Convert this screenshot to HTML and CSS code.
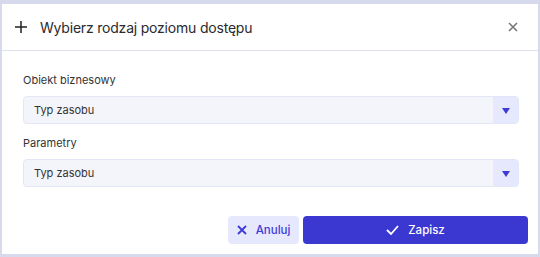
FILE: index.html
```html
<!DOCTYPE html>
<html lang="pl">
<head>
	<meta charset="UTF-8">
	<title>Wybierz rodzaj poziomu dostępu</title>
	<link rel="stylesheet" href="styles.css">
</head>
<body>
	<div class="dialog">
		<header class="naglowek">
			<svg class="ikona-plus" width="14" height="14" viewBox="0 0 14 14">
				<path d="M7 1v12M1 7h12" stroke="#222" stroke-width="1.5" fill="none"/>
			</svg>
			<h1>Wybierz rodzaj poziomu dostępu</h1>
			<button class="zamknij" aria-label="Zamknij">
				<svg width="10" height="10" viewBox="0 0 10 10">
					<path d="M1 1l8 8M9 1l-8 8" stroke="#777" stroke-width="1.6" fill="none"/>
				</svg>
			</button>
		</header>
		<section class="tresc">
			<label class="etykieta">Obiekt biznesowy</label>
			<div class="pole">
				<span class="wartosc">Typ zasobu</span>
				<span class="strzalka"><i></i></span>
			</div>
			<label class="etykieta">Parametry</label>
			<div class="pole">
				<span class="wartosc">Typ zasobu</span>
				<span class="strzalka"><i></i></span>
			</div>
		</section>
		<footer class="stopka">
			<button class="btn btn-anuluj">
				<svg width="10" height="10" viewBox="0 0 10 10">
					<path d="M1 1l8 8M9 1l-8 8" stroke="#3f3ad6" stroke-width="1.8" fill="none"/>
				</svg>
				Anuluj
			</button>
			<button class="btn btn-zapisz">
				<svg width="13" height="10" viewBox="0 0 13 10">
					<path d="M1 5l4 4 7-8" stroke="#fff" stroke-width="1.8" fill="none"/>
				</svg>
				Zapisz
			</button>
		</footer>
	</div>
</body>
</html>
```

FILE: styles.css
```css
*{
	margin:0;
	padding:0;
	box-sizing: border-box;
}
body{
	font-family: Inter, "Noto Sans", sans-serif;
	background: #d6daec;
	padding: 4px 2px 3px 2px;
	height: 257px;
}
.dialog{
	background: #fff;
	height: 250px;
	display: flex;
	flex-direction: column;
}
.naglowek{
	height: 47px;
	display: flex;
	align-items: center;
	padding: 0 18px 0 12px;
	border-bottom: 1px solid #dfe0ea;
}
.naglowek h1{
	flex: 1;
	font-size: 14px;
	font-weight: 400;
	color: #2a2a2e;
	margin-left: 12px;
	letter-spacing: -0.2px;
}
.zamknij{
	border: none;
	background: none;
	display: flex;
	cursor: pointer;
	padding: 2px;
}
.tresc{
	padding: 22px 19px 0 21px;
}
.etykieta{
	display: block;
	font-size: 11px;
	color: #333;
	margin-bottom: 9px;
	line-height: 14px;
}
.pole{
	display: flex;
	height: 28px;
	background: #f4f5fa;
	border: 1px solid #e3e6f6;
	border-radius: 4px;
	margin-bottom: 12px;
	overflow: hidden;
}
.wartosc{
	flex: 1;
	font-size: 11px;
	color: #333;
	padding-left: 10px;
	line-height: 26px;
}
.strzalka{
	width: 25px;
	background: #e6e9fd;
	display: flex;
	align-items: center;
	justify-content: center;
}
.strzalka i{
	width: 0;
	height: 0;
	border-left: 4px solid transparent;
	border-right: 4px solid transparent;
	border-top: 6px solid #3f3ad6;
	margin-top: 1px;
}
.stopka{
	margin-top: auto;
	display: flex;
	justify-content: flex-end;
	gap: 4px;
	padding: 0 10px 10px 0;
}
.btn{
	height: 28px;
	border: none;
	border-radius: 4px;
	font-family: Inter, "Noto Sans", sans-serif;
	font-size: 11.5px;
	font-weight: 500;
	display: flex;
	align-items: center;
	justify-content: center;
	gap: 9px;
	cursor: pointer;
}
.btn-anuluj{
	width: 71px;
	background: #e6e9fd;
	color: #3f3ad6;
}
.btn-zapisz{
	width: 225px;
	background: #3b38d1;
	color: #fff;
}
```
